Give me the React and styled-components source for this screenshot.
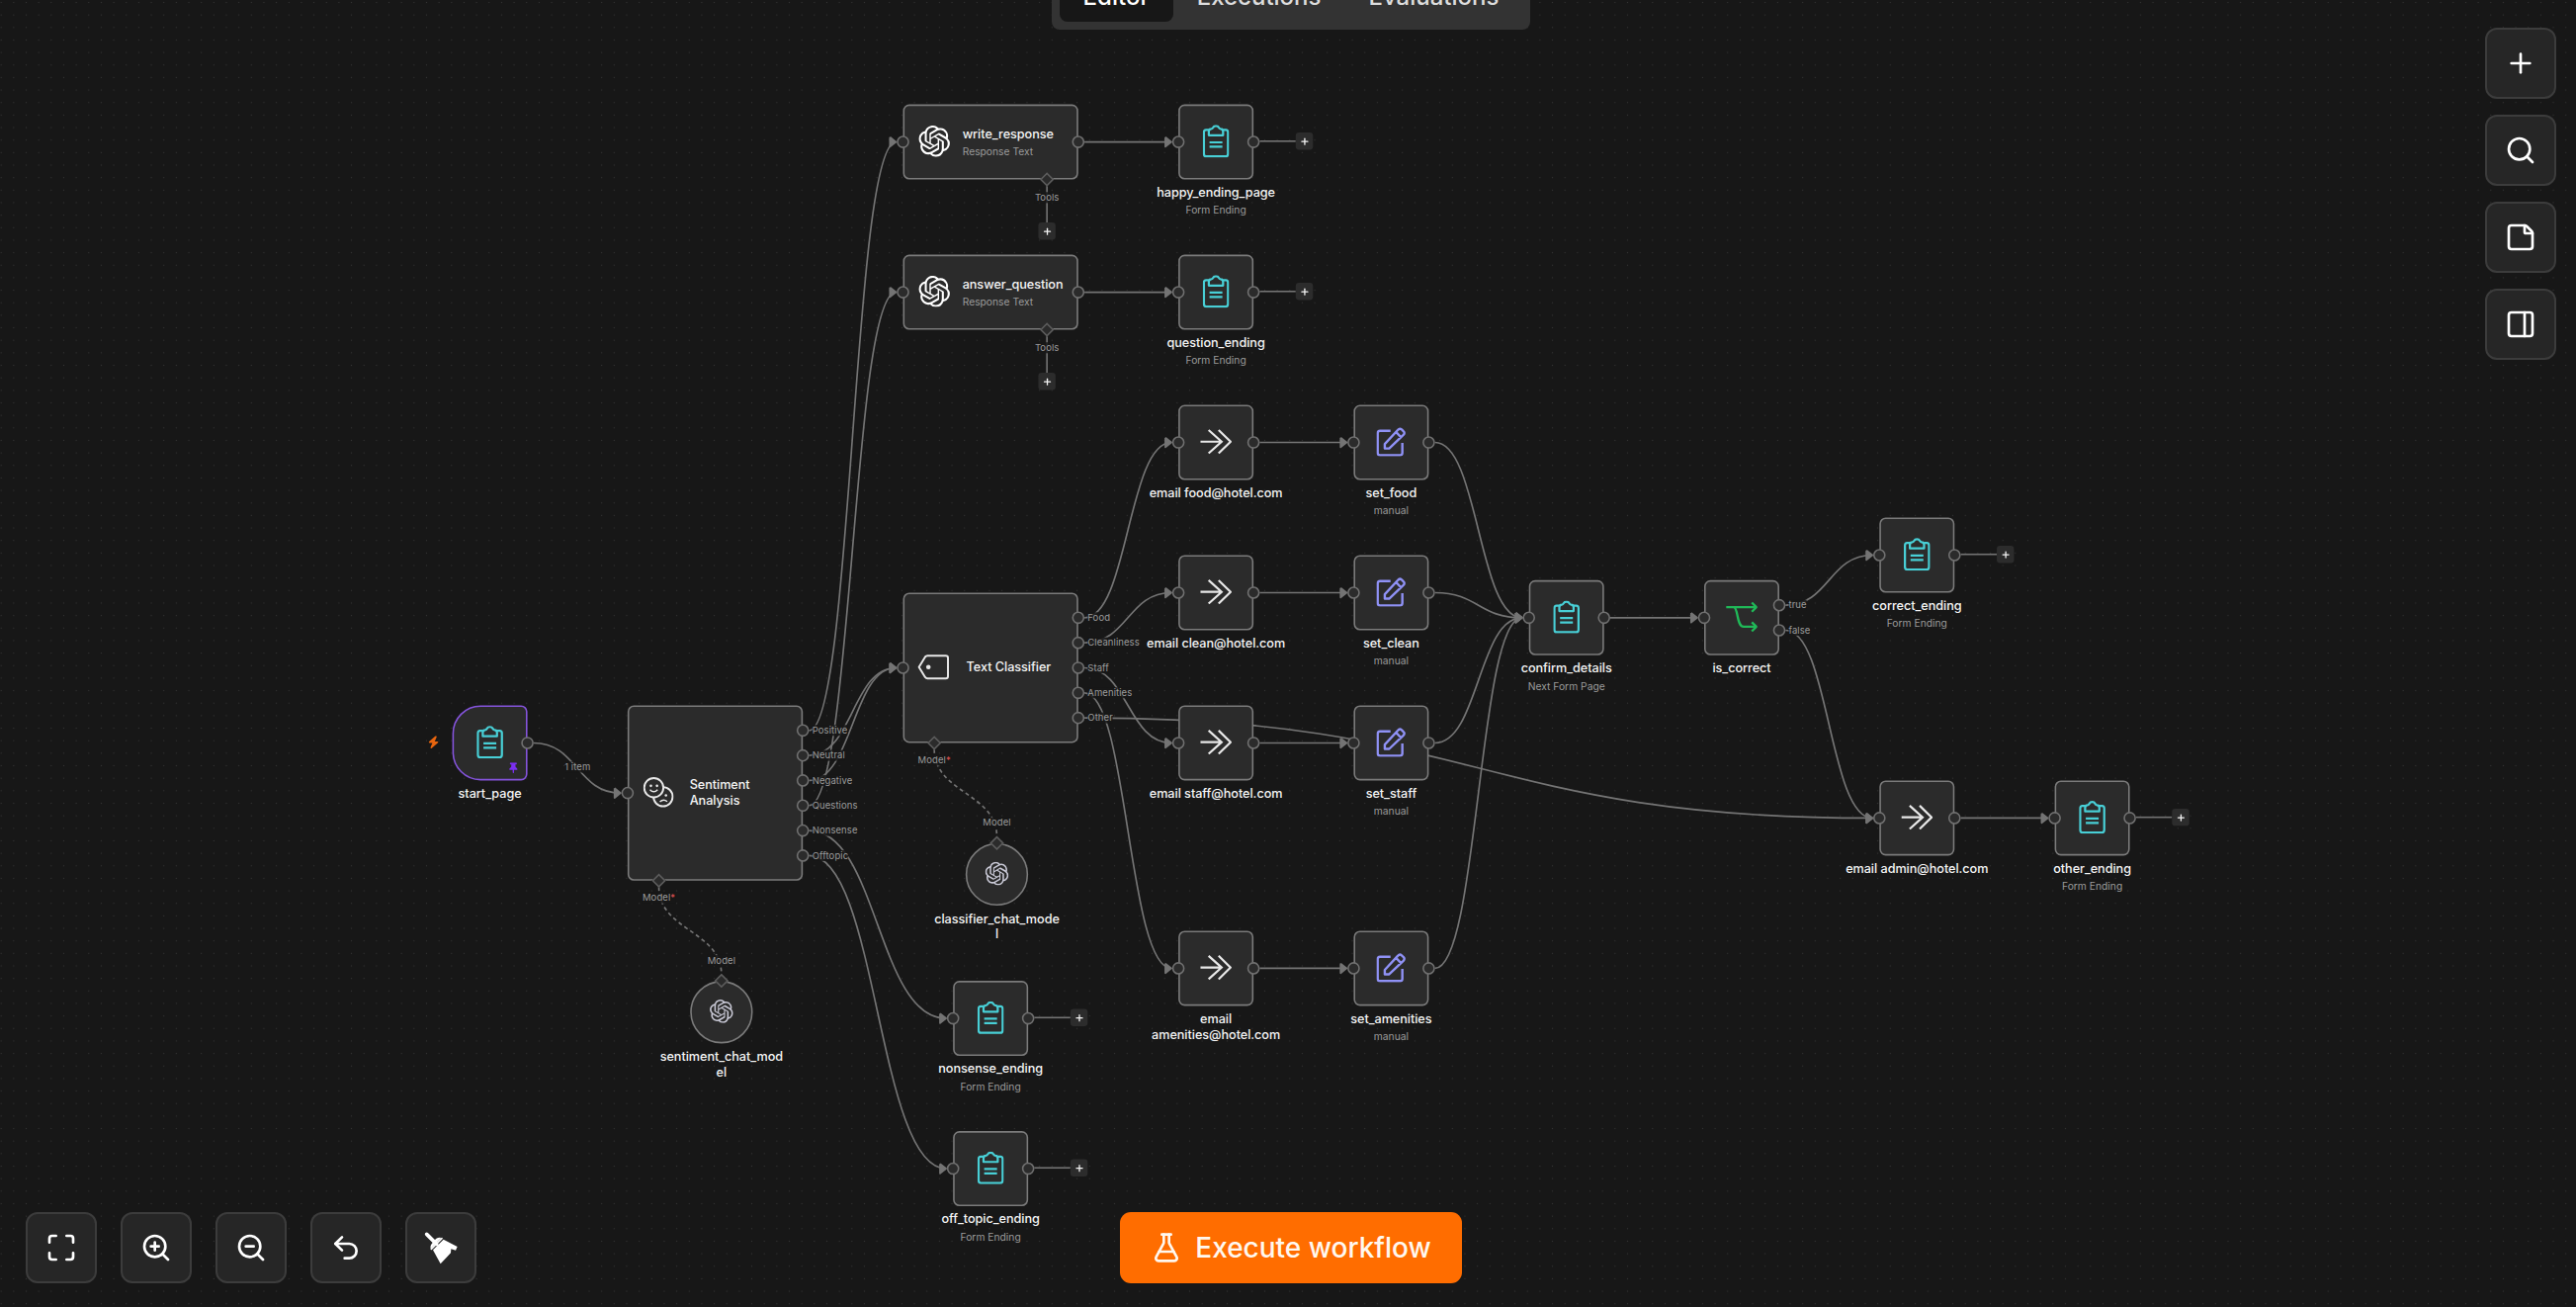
import React from 'react';
import styled, { createGlobalStyle, css } from 'styled-components';
import {
    Maximize, ZoomIn, ZoomOut, Undo2, Plus, Search, StickyNote, PanelRight, FlaskConical,
} from 'lucide-react';
import { SiOpenai } from 'react-icons/si';
import { FaThumbtack } from 'react-icons/fa';
import { FaBolt } from 'react-icons/fa6';

const theme = {
    canvas: '#171717',
    dot: '#343434',
    node: '#2b2b2b',
    nodeBorder: '#7b7b7b',
    edge: '#747474',
    handle: '#707070',
    text: '#f5f5f5',
    textLight: '#9b9b9b',
    button: '#262626',
    buttonBorder: '#3c3c3c',
    primary: '#ff6d00',
    pinned: '#7b2ff2',
    teal: '#48cfd6',
    indigo: '#8f91f5',
    green: '#20b958',
    font: 'Inter, "Liberation Sans", sans-serif',
};

// one grid cell of the canvas, in canvas units
const CELL = 16;
const ZOOM = 0.7915;

const GlobalStyle = createGlobalStyle`
  * {
    box-sizing: border-box;
  }
  body {
    margin: 0;
    background: ${theme.canvas};
    font-family: ${theme.font};
  }
`

const Page = styled.main`
  position: relative;
  width: 100%;
  height: 1322px;
  overflow: hidden;
  background-color: ${theme.canvas};
  background-image: radial-gradient(circle at center, ${theme.dot} 0.5px, transparent 1px);
  background-size: 12.664px 12.664px;
  background-position: 7.5px 8.8px;
`
const Viewport = styled.div`
  position: absolute;
  top: 0;
  left: 0;
  transform: translate(457.6px, 105.6px) scale(${ZOOM});
  transform-origin: 0 0;
`
const EdgeLayer = styled.svg`
  position: absolute;
  top: 0;
  left: 0;
  width: 1px;
  height: 1px;
  overflow: visible;
`
const EdgePath = styled.path`
  fill: none;
  stroke: ${theme.edge};
  stroke-width: 2.1;
  stroke-dasharray: ${({ $dashed }) => ($dashed ? '5 4' : 'none')};
`
const EdgeLabel = styled.span`
  position: absolute;
  transform: translate(-50%, -50%);
  font-size: 12px;
  line-height: 14px;
  letter-spacing: 0.1px;
  white-space: nowrap;
  color: ${theme.textLight};
  background: rgba(23, 23, 23, 0.85);
`

const NodeBox = styled.div`
  position: absolute;
  display: flex;
  align-items: center;
  justify-content: ${({ $wide }) => ($wide ? 'flex-start' : 'center')};
  gap: ${({ $gap }) => $gap || 16}px;
  padding-bottom: 2px;
  padding-left: ${({ $wide }) => ($wide ? 18 : 0)}px;
  border: 2px solid ${theme.nodeBorder};
  border-radius: 8px;
  background: ${theme.node};
  ${({ $round }) => $round && css`
    border-radius: 50%;
  `}
  ${({ $trigger }) => $trigger && css`
    border-color: #8554dc;
    border-radius: 36px 8px 8px 36px;
  `}
`
const Caption = styled.div`
  position: absolute;
  top: calc(100% + 7.5px);
  left: 50%;
  transform: translateX(-50%);
  width: ${({ $width }) => $width}px;
  display: flex;
  flex-direction: column;
  gap: 5px;
  text-align: center;
`
const InnerCaption = styled.div`
  display: flex;
  flex-direction: column;
  gap: 5px;
`
const Title = styled.p`
  margin: 0;
  font-size: 16px;
  font-weight: 500;
  line-height: 20px;
  letter-spacing: -0.06px;
  overflow-wrap: anywhere;
  color: ${theme.text};
`
const Subtitle = styled.p`
  margin: 0;
  font-size: 13px;
  line-height: 16px;
  color: ${theme.textLight};
`
const PinMark = styled.span`
  position: absolute;
  right: 9px;
  bottom: 7px;
  display: flex;
  color: ${theme.pinned};
`
const TriggerMark = styled.span`
  position: absolute;
  left: -34px;
  display: flex;
  color: #e8650f;
`

const Handle = styled.span`
  position: absolute;
  width: 16px;
  height: 16px;
  border: 2px solid ${theme.handle};
  border-radius: 50%;
  background: ${theme.node};
  transform: translate(-50%, -50%);
`
const Diamond = styled.span`
  position: absolute;
  width: 13px;
  height: 13px;
  border: 2px solid #5c5c5c;
  background: ${theme.node};
  transform: translate(-50%, -50%) rotate(45deg);
`
const HandleLabel = styled(EdgeLabel)`
  transform: translate(${({ $side }) => ($side ? '0' : '-50%')}, -50%);

  b {
    font-weight: 400;
    color: #e05252;
  }
`
const AddLink = styled.div`
  position: absolute;
  display: flex;
  align-items: center;
  flex-direction: ${({ $down }) => ($down ? 'column' : 'row')};
  transform: translate${({ $down }) => ($down ? 'X' : 'Y')}(-50%);
`
const AddLine = styled.span`
  width: ${({ $down }) => ($down ? 2 : 46)}px;
  height: ${({ $down }) => ($down ? 47 : 2)}px;
  background: ${theme.edge};
`
const AddButton = styled.span`
  display: flex;
  align-items: center;
  justify-content: center;
  width: 22px;
  height: 22px;
  border-radius: 4px;
  background: #2c2c2c;
  color: ${theme.text};
`

const Overlay = styled.div`
  position: relative;
  display: flex;
  flex-direction: column;
  justify-content: space-between;
  height: 100%;
  padding: 0 20px 24px 26px;
`
const OverlayRow = styled.div`
  display: grid;
  grid-template-columns: 1fr auto 1fr;
  align-items: start;
`
const Tabs = styled.nav`
  grid-column: 2;
  display: flex;
  margin-top: -38px;
  padding: 8px;
  border-radius: 8px;
  background: #333333;
`
const Tab = styled.button`
  height: 52px;
  padding: 0 24px;
  border: none;
  border-radius: 8px;
  font-family: ${theme.font};
  font-size: 24px;
  font-weight: 500;
  color: ${({ $active }) => ($active ? '#ffffff' : '#dddddd')};
  background: ${({ $active }) => ($active ? theme.canvas : 'transparent')};
`
const SideTools = styled.div`
  grid-column: 3;
  justify-self: end;
  display: flex;
  flex-direction: column;
  gap: 16px;
  padding-top: 28px;
`
const ViewTools = styled.div`
  display: flex;
  gap: 24px;
`
const IconButton = styled.button`
  display: flex;
  align-items: center;
  justify-content: center;
  width: 72px;
  height: 72px;
  padding: 0;
  border: 2px solid ${theme.buttonBorder};
  border-radius: 12px;
  color: #ffffff;
  background: ${theme.button};
`
const ExecuteButton = styled.button`
  display: flex;
  align-items: center;
  justify-content: center;
  gap: 13px;
  width: 346px;
  height: 72px;
  padding: 0;
  border: none;
  border-radius: 11px;
  font-family: ${theme.font};
  font-size: 28px;
  font-weight: 500;
  color: #fff8f0;
  background: ${theme.primary};
`

const FormIcon = () => (
    <svg width="34" height="42" viewBox="0 0 78 97" fill="none" stroke={theme.teal} strokeWidth="6.500">
        <path d="M18 15H10Q3.500 15 3.500 22V86Q3.500 93.500 10 93.500H68Q74.500 93.500 74.500 86V22Q74.500 15 68 15H60" />
        <path d="M18 31V20Q18 13 25 12.500Q29 12 30 9Q33 3.500 39 3.500T48 9Q49 12 53 12.500Q60 13 60 20V31Z" strokeLinejoin="round" />
        <path d="M20 52H58M20 65H58" />
    </svg>
);

const ForwardIcon = () => (
    <svg width="40" height="32" viewBox="0 0 94 74" fill="none" stroke="#e8e8e8" strokeWidth="6.500">
        <path d="M0 37H65M25 2L64 37L25 72M55 2L91 37L55 72" />
    </svg>
);

const EditIcon = () => (
    <svg width="38" height="38" viewBox="0 0 88 88" fill="none" stroke={theme.indigo} strokeWidth="7" strokeLinejoin="round">
        <path d="M42 12H11Q4 12 4 19V77Q4 84 11 84H70Q77 84 77 77V48" />
        <path d="M25 64V51L64 9Q69 3 75 8L80 13Q86 18 80 24L38 64ZM58 15L73 31" />
    </svg>
);

const BranchIcon = () => (
    <svg width="40" height="40" viewBox="0 0 96 92" fill="none" stroke={theme.green} strokeWidth="7">
        <path d="M0 16H92M24 16C38 20 32 76 54 76H92" />
        <path d="M79 2L93 16L79 30M79 62L93 76L79 90" strokeLinejoin="round" />
    </svg>
);

const MoodIcon = () => (
    <svg width="40" height="40" viewBox="0 0 96 94" fill="none" stroke="#e8e8e8" strokeWidth="6">
        <circle cx="62" cy="61" r="30" />
        <path d="M52 77Q63 66 75 76" strokeWidth="4.500" />
        <circle cx="71" cy="57" r="4" fill="#e8e8e8" stroke="none" />
        <circle cx="33" cy="33" r="30" fill={theme.node} />
        <path d="M21 39Q33 52 45 39" strokeWidth="4.500" />
        <circle cx="24" cy="27" r="4" fill="#e8e8e8" stroke="none" />
        <circle cx="43" cy="27" r="4" fill="#e8e8e8" stroke="none" />
    </svg>
);

const TagIcon = () => (
    <svg width="40" height="32" viewBox="3 0 96 76" overflow="visible" fill="none" stroke="#e8e8e8" strokeWidth="6" strokeLinejoin="round">
        <path d="M30 3H86Q93 3 93 10V66Q93 73 86 73H30Q26 73 23 69L4 38L23 7Q26 3 30 3Z" />
        <circle cx="33" cy="38" r="7" fill="#e8e8e8" stroke="none" />
    </svg>
);

const BroomIcon = () => (
    <svg width="34" height="34" viewBox="0 0 102 102" fill="currentColor">
        <path d="M8 10L38 40" stroke="currentColor" strokeWidth="11" strokeLinecap="round" />
        <path d="M20 54Q17 44 28 34Q38 18 52 21Z" />
        <path d="M22 55L54 23" stroke="currentColor" strokeWidth="5" strokeLinecap="round" />
        <path d="M59 26L101 48L96 59L82 55L81 67L50 100L27 58Z" />
    </svg>
);

const icons = {
    form: <FormIcon />,
    forward: <ForwardIcon />,
    edit: <EditIcon />,
    branch: <BranchIcon />,
    mood: <MoodIcon />,
    tag: <TagIcon />,
    openai: <SiOpenai size={40} color="#ffffff" />,
    openaiSmall: <SiOpenai size={30} color="#c9c9d6" />,
};

// x and y are counted in grid cells, w and h in canvas units
const nodes = [
    { id: 'start', x: 0, y: 48, icon: 'form', title: 'start_page', trigger: true, out: [''] },
    { id: 'sentiment', x: 14, y: 48, w: 224, h: 224, icon: 'mood', title: 'Sentiment Analysis', wide: true, gap: 20, input: true, model: true,
      out: ['Positive', 'Neutral', 'Negative', 'Questions', 'Nonsense', 'Offtopic'] },
    { id: 'sentimentModel', x: 19, y: 70, w: 80, h: 80, icon: 'openaiSmall', title: 'sentiment_chat_model', round: true },
    { id: 'write', x: 36, y: 0, w: 224, icon: 'openai', title: 'write_response', subtitle: 'Response Text', wide: true, input: true, out: [''], tools: true },
    { id: 'answer', x: 36, y: 12, w: 224, icon: 'openai', title: 'answer_question', subtitle: 'Response Text', wide: true, input: true, out: [''], tools: true },
    { id: 'happy', x: 58, y: 0, icon: 'form', title: 'happy_ending_page', subtitle: 'Form Ending', input: true, out: [''], open: true },
    { id: 'question', x: 58, y: 12, icon: 'form', title: 'question_ending', subtitle: 'Form Ending', input: true, out: [''], open: true },
    { id: 'classifier', x: 36, y: 39, w: 224, h: 192, icon: 'tag', title: 'Text Classifier', wide: true, gap: 21, input: true, model: true,
      out: ['Food', 'Cleanliness', 'Staff', 'Amenities', 'Other'] },
    { id: 'classifierModel', x: 41, y: 59, w: 80, h: 80, icon: 'openaiSmall', title: 'classifier_chat_model', round: true },
    { id: 'nonsense', x: 40, y: 70, icon: 'form', title: 'nonsense_ending', subtitle: 'Form Ending', input: true, out: [''], open: true },
    { id: 'offtopic', x: 40, y: 82, icon: 'form', title: 'off_topic_ending', subtitle: 'Form Ending', input: true, out: [''], open: true },
    { id: 'mailFood', x: 58, y: 24, icon: 'forward', title: 'email food@hotel.com', input: true, out: [''] },
    { id: 'mailClean', x: 58, y: 36, icon: 'forward', title: 'email clean@hotel.com', input: true, out: [''] },
    { id: 'mailStaff', x: 58, y: 48, icon: 'forward', title: 'email staff@hotel.com', input: true, out: [''] },
    { id: 'mailAmenities', x: 58, y: 66, icon: 'forward', title: 'email amenities@hotel.com', input: true, out: [''] },
    { id: 'setFood', x: 72, y: 24, icon: 'edit', title: 'set_food', subtitle: 'manual', input: true, out: [''] },
    { id: 'setClean', x: 72, y: 36, icon: 'edit', title: 'set_clean', subtitle: 'manual', input: true, out: [''] },
    { id: 'setStaff', x: 72, y: 48, icon: 'edit', title: 'set_staff', subtitle: 'manual', input: true, out: [''] },
    { id: 'setAmenities', x: 72, y: 66, icon: 'edit', title: 'set_amenities', subtitle: 'manual', input: true, out: [''] },
    { id: 'confirm', x: 86, y: 38, icon: 'form', title: 'confirm_details', subtitle: 'Next Form Page', input: true, out: [''] },
    { id: 'isCorrect', x: 100, y: 38, icon: 'branch', title: 'is_correct', input: true, out: ['true', 'false'] },
    { id: 'correct', x: 114, y: 33, icon: 'form', title: 'correct_ending', subtitle: 'Form Ending', input: true, out: [''], open: true },
    { id: 'mailAdmin', x: 114, y: 54, icon: 'forward', title: 'email admin@hotel.com', input: true, out: [''] },
    { id: 'other', x: 128, y: 54, icon: 'form', title: 'other_ending', subtitle: 'Form Ending', input: true, out: [''], open: true },
];

// [source, output index, target]
const edges = [
    ['start', 0, 'sentiment'],
    ['sentiment', 0, 'write'],
    ['sentiment', 1, 'classifier'],
    ['sentiment', 2, 'classifier'],
    ['sentiment', 3, 'answer'],
    ['sentiment', 4, 'nonsense'],
    ['sentiment', 5, 'offtopic'],
    ['write', 0, 'happy'],
    ['answer', 0, 'question'],
    ['classifier', 0, 'mailFood'],
    ['classifier', 1, 'mailClean'],
    ['classifier', 2, 'mailStaff'],
    ['classifier', 3, 'mailAmenities'],
    ['classifier', 4, 'mailAdmin'],
    ['mailFood', 0, 'setFood'],
    ['mailClean', 0, 'setClean'],
    ['mailStaff', 0, 'setStaff'],
    ['mailAmenities', 0, 'setAmenities'],
    ['setFood', 0, 'confirm'],
    ['setClean', 0, 'confirm'],
    ['setStaff', 0, 'confirm'],
    ['setAmenities', 0, 'confirm'],
    ['confirm', 0, 'isCorrect'],
    ['isCorrect', 0, 'correct'],
    ['isCorrect', 1, 'mailAdmin'],
    ['mailAdmin', 0, 'other'],
];

const modelEdges = [
    ['sentiment', 'sentimentModel'],
    ['classifier', 'classifierModel'],
];

const findNode = (id) => {
    const { w = 96, h = 96, ...node } = nodes.find((n) => n.id === id);
    return { ...node, w, h, left: node.x * CELL, top: node.y * CELL };
};

const outputY = (h, index, count) => h / 2 + (index - (count - 1) / 2) * 32;

const edgePath = ([from, index, to]) => {
    const a = findNode(from);
    const b = findNode(to);
    const x1 = a.left + a.w + 8;
    const y1 = a.top + outputY(a.h, index, a.out.length);
    const x2 = b.left - 9;
    const y2 = b.top + b.h / 2;
    const mid = (x1 + x2) / 2;
    return `M${x1} ${y1}C${mid} ${y1} ${mid} ${y2} ${x2} ${y2}`;
};

const modelPath = ([from, to]) => {
    const a = findNode(from);
    const b = findNode(to);
    const x1 = a.left + 40;
    const y1 = a.top + a.h + 8;
    const x2 = b.left + b.w / 2;
    const y2 = b.top - 8;
    const mid = (y1 + y2) / 2;
    return `M${x1} ${y1}C${x1} ${mid} ${x2} ${mid} ${x2} ${y2}`;
};

const AddNext = ({ x, y, down }) => (
    <AddLink $down={down} style={{ left: x, top: y }}>
        <AddLine $down={down} />
        <AddButton><Plus size={13} strokeWidth={3} /></AddButton>
    </AddLink>
);

const CanvasNode = ({ id }) => {
    const node = findNode(id);
    const { w, h, left, top, out = [] } = node;
    // positions inside the box start at its padding edge
    const edge = (v) => v - 2;
    return (
        <NodeBox
            $wide={node.wide}
            $round={node.round}
            $trigger={node.trigger}
            $gap={node.gap}
            style={{ left, top, width: w, height: h }}
        >
            {node.trigger && <TriggerMark><FaBolt size={16} /></TriggerMark>}
            {icons[node.icon]}
            {node.wide
                ? <InnerCaption>
                    <Title>{node.title}</Title>
                    {node.subtitle && <Subtitle>{node.subtitle}</Subtitle>}
                </InnerCaption>
                : <Caption $width={node.round ? 162 : 192}>
                    <Title>{node.title}</Title>
                    {node.subtitle && <Subtitle>{node.subtitle}</Subtitle>}
                </Caption>}
            {node.trigger && <PinMark><FaThumbtack size={14} /></PinMark>}
            {node.open && <AddNext x={edge(w + 8)} y={edge(h / 2 - 1)} />}
            {node.tools && <AddNext x={edge(184)} y={edge(h + 8)} down />}
            {node.input && <Handle style={{ left: edge(0), top: edge(h / 2) }} />}
            {out.map((label, i) => (
                <React.Fragment key={label + i}>
                    <Handle style={{ left: edge(w), top: edge(outputY(h, i, out.length)) }} />
                    {label && (
                        <HandleLabel $side style={{ left: edge(w + 12), top: edge(outputY(h, i, out.length)) }}>
                            {label}
                        </HandleLabel>
                    )}
                </React.Fragment>
            ))}
            {node.tools && <Diamond style={{ left: edge(184), top: edge(h) }} />}
            {node.tools && <HandleLabel style={{ left: edge(184), top: edge(h + 23) }}>Tools</HandleLabel>}
            {node.model && <Diamond style={{ left: edge(40), top: edge(h) }} />}
            {node.model && <HandleLabel style={{ left: edge(40), top: edge(h + 22) }}>Model<b>*</b></HandleLabel>}
            {node.round && <Diamond style={{ left: edge(w / 2), top: edge(0) }} />}
            {node.round && <HandleLabel style={{ left: edge(w / 2), top: edge(-26) }}>Model</HandleLabel>}
        </NodeBox>
    );
};

const Workflow = () => (
    <Viewport>
        <EdgeLayer>
            <defs>
                <marker id="arrow" viewBox="-10 -10 20 20" markerWidth="14.5" markerHeight="14.5" orient="auto">
                    <polyline
                        points="-5,-4 0,0 -5,4 -5,-4"
                        fill={theme.edge}
                        stroke={theme.edge}
                        strokeWidth="1.5"
                        strokeLinejoin="round"
                    />
                </marker>
            </defs>
            {edges.map((e) => <EdgePath key={e.join('-')} d={edgePath(e)} markerEnd="url(#arrow)" />)}
            {modelEdges.map((e) => <EdgePath key={e.join('-')} d={modelPath(e)} $dashed />)}
        </EdgeLayer>
        <EdgeLabel style={{ left: 160, top: 847 }}>1 item</EdgeLabel>
        {nodes.map(({ id }) => <CanvasNode key={id} id={id} />)}
    </Viewport>
);

const App = () => (
    <Page>
        <GlobalStyle />
        <Workflow />
        <Overlay>
            <OverlayRow>
                <Tabs>
                    <Tab $active>Editor</Tab>
                    <Tab>Executions</Tab>
                    <Tab>Evaluations</Tab>
                </Tabs>
                <SideTools>
                    <IconButton><Plus size={32} /></IconButton>
                    <IconButton><Search size={32} /></IconButton>
                    <IconButton><StickyNote size={32} /></IconButton>
                    <IconButton><PanelRight size={32} /></IconButton>
                </SideTools>
            </OverlayRow>
            <OverlayRow>
                <ViewTools>
                    <IconButton><Maximize size={32} /></IconButton>
                    <IconButton><ZoomIn size={32} /></IconButton>
                    <IconButton><ZoomOut size={32} /></IconButton>
                    <IconButton><Undo2 size={32} /></IconButton>
                    <IconButton><BroomIcon /></IconButton>
                </ViewTools>
                <ExecuteButton>
                    <FlaskConical size={32} />
                    Execute workflow
                </ExecuteButton>
            </OverlayRow>
        </Overlay>
    </Page>
);

export default App;
